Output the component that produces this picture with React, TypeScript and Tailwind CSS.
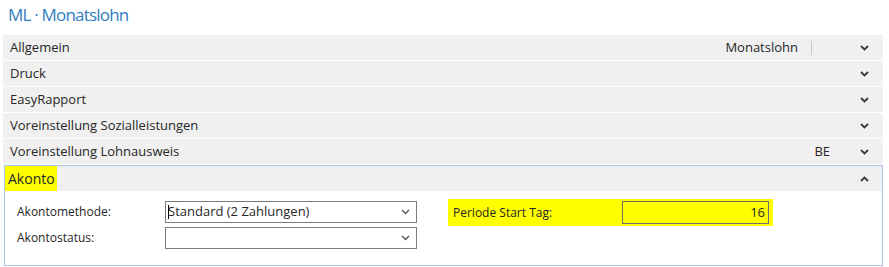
import React from "react";

const font = { fontFamily: '"Open Sans", "Noto Sans", sans-serif' };

function Chevron({ up = false }: { up?: boolean }) {
  return (
    <svg width="9" height="6" viewBox="0 0 9 6" className="shrink-0">
      <path
        d={up ? "M1 5 L4.5 1.5 L8 5" : "M1 1 L4.5 4.5 L8 1"}
        fill="none"
        stroke="#3a3a3a"
        strokeWidth="1.8"
      />
    </svg>
  );
}

function SmallChevron() {
  return (
    <svg width="9" height="6" viewBox="0 0 9 6">
      <path d="M1 1 L4.5 4.5 L8 1" fill="none" stroke="#555" strokeWidth="1.4" />
    </svg>
  );
}

function Section({ title, extra, sep = false }: { title: string; extra?: string; sep?: boolean }) {
  return (
    <div className="h-[25px] bg-[#f0f0f0] flex items-center pl-[7px] pr-[14px] text-[13px] text-[#262626]">
      <span className="flex-1">{title}</span>
      {extra && <span className={sep ? "mr-[13px]" : "mr-[30px]"}>{extra}</span>}
      {sep && <span className="w-px h-[14px] bg-[#c8c8c8] mr-[48px]" />}
      <Chevron />
    </div>
  );
}

function Select({ value }: { value?: string }) {
  return (
    <div className="w-[252px] h-[22px] border border-[#7a7a7a] bg-white flex items-center pl-[2px] pr-[6px]">
      <span className="flex-1 text-[13px] text-[#262626] flex items-center">
        {value && <span className="w-px h-[14px] bg-black mr-[-1px]" />}
        {value}
      </span>
      <SmallChevron />
    </div>
  );
}

export default function App() {
  return (
    <div className="w-[889px] h-[267px] bg-white overflow-hidden" style={font}>
      <div className="pl-[8px] pt-[2px] h-[35px] text-[17px] tracking-[-0.8px] text-[#2f7dc0]">
        ML · Monatslohn
      </div>
      <div className="pl-[3px] pr-[6px] flex flex-col gap-px">
        <Section title="Allgemein" extra="Monatslohn" sep />
        <Section title="Druck" />
        <Section title="EasyRapport" />
        <Section title="Voreinstellung Sozialleistungen" />
        <Section title="Voreinstellung Lohnausweis" extra="BE" />
        <div className="border border-[#a9c4e2] h-[101px] ml-px">
          <div className="h-[25px] bg-[#f0f0f0] flex items-center pr-[13px]">
            <span className="bg-[#ffff00] h-[25px] flex items-center pl-[3px] pr-[2px] text-[14px] text-[#262626]">
              Akonto
            </span>
            <span className="flex-1" />
            <Chevron up />
          </div>
          <div className="flex pt-[10px] pl-[12px]">
            <div className="flex flex-col gap-[4px]">
              <div className="flex items-center">
                <span className="w-[148px] text-[12px] text-[#262626]">Akontomethode:</span>
                <Select value="Standard (2 Zahlungen)" />
              </div>
              <div className="flex items-center">
                <span className="w-[148px] text-[12px] text-[#262626]">Akontostatus:</span>
                <Select />
              </div>
            </div>
            <div className="ml-[31px] -mt-[2px] h-[27px] w-[325px] bg-[#ffff00] flex items-center pl-[5px]">
              <span className="w-[169px] text-[12px] text-[#262626]">Periode Start Tag:</span>
              <div className="w-[147px] h-[23px] border border-[#6e6e6e] flex items-center justify-end pr-[3px] text-[13px] text-[#262626]">
                16
              </div>
            </div>
          </div>
        </div>
      </div>
    </div>
  );
}
